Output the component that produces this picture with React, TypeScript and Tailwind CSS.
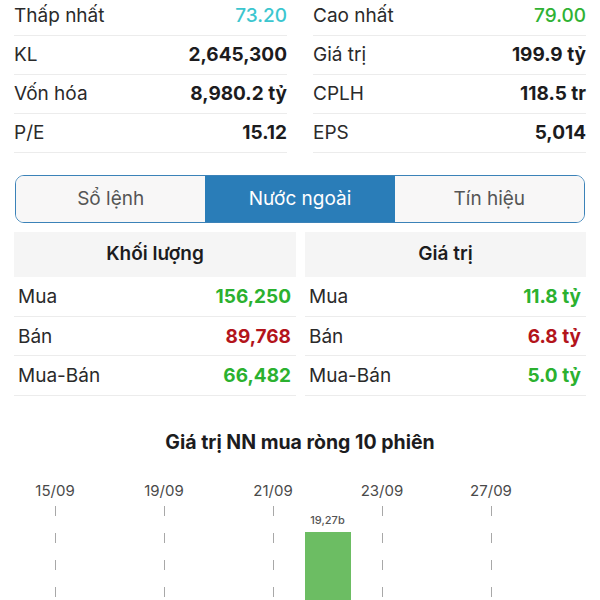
import React from "react";

const font = { fontFamily: "Inter, 'Noto Sans', sans-serif" };

const summary: [string, string, string][][] = [
  [
    ["Thấp nhất", "73.20", "text-[#3cc6cf] font-medium"],
    ["KL", "2,645,300", "text-[#1c1c1e] font-bold"],
    ["Vốn hóa", "8,980.2 tỷ", "text-[#1c1c1e] font-bold"],
    ["P/E", "15.12", "text-[#1c1c1e] font-bold"],
  ],
  [
    ["Cao nhất", "79.00", "text-[#2fb234] font-medium"],
    ["Giá trị", "199.9 tỷ", "text-[#1c1c1e] font-bold"],
    ["CPLH", "118.5 tr", "text-[#1c1c1e] font-bold"],
    ["EPS", "5,014", "text-[#1c1c1e] font-bold"],
  ],
];

const foreign = [
  {
    title: "Khối lượng",
    rows: [
      ["Mua", "156,250", "text-[#2bb12f]"],
      ["Bán", "89,768", "text-[#b3141b]"],
      ["Mua-Bán", "66,482", "text-[#2bb12f]"],
    ],
  },
  {
    title: "Giá trị",
    rows: [
      ["Mua", "11.8 tỷ", "text-[#2bb12f]"],
      ["Bán", "6.8 tỷ", "text-[#b3141b]"],
      ["Mua-Bán", "5.0 tỷ", "text-[#2bb12f]"],
    ],
  },
];

const tabs = ["Sổ lệnh", "Nước ngoài", "Tín hiệu"];
const dates = ["15/09", "19/09", "21/09", "23/09", "27/09"];

// net buy value per session (billion), only one visible in this crop
const bars = [{ slot: 5, value: 19.27 }];

export default function App() {
  return (
    <div className="w-[600px] h-[600px] overflow-hidden bg-white text-[#1c1c1e]" style={font}>
      {/* summary grid */}
      <div className="-mt-[3px] grid grid-cols-2 gap-x-[26px] px-[14px]">
        {summary.map((col, ci) => (
          <div key={ci}>
            {col.map(([label, value, cls]) => (
              <div
                key={label}
                className="flex h-[39px] items-center justify-between border-b border-[#ececec] text-[19px]"
              >
                <span className="text-[#2a2a2a]">{label}</span>
                <span className={cls}>{value}</span>
              </div>
            ))}
          </div>
        ))}
      </div>

      {/* tabs */}
      <div className="mx-[15px] mt-[22px] flex h-[48px] overflow-hidden rounded-[9px] border-[1.5px] border-[#3b82b8]">
        {tabs.map((tab, i) => (
          <div
            key={tab}
            className={`flex flex-1 items-center justify-center text-[19px] ${
              i === 1 ? "bg-[#2a7db8] text-white" : "bg-[#f8f7f7] text-[#555]"
            }`}
          >
            {tab}
          </div>
        ))}
      </div>

      {/* foreign trading */}
      <div className="mt-[9px] flex gap-[9px] px-[14px]">
        {foreign.map((block, bi) => (
          <div key={block.title} className={bi === 0 ? "w-[282px]" : "flex-1"}>
            <div className="flex h-[45px] items-center justify-center bg-[#f5f5f5] text-[19px] font-semibold text-[#1c1c1e]">
              {block.title}
            </div>
            {block.rows.map(([label, value, cls]) => (
              <div
                key={label}
                className="flex h-[39.5px] items-center justify-between border-b border-[#ececec] pt-[2px] pl-[4px] pr-[5px] text-[19px]"
              >
                <span className="text-[#2a2a2a]">{label}</span>
                <span className={`font-bold ${cls}`}>{value}</span>
              </div>
            ))}
          </div>
        ))}
      </div>

      {/* chart */}
      <div className="mt-[32px] text-center text-[19.5px] leading-[29px] font-bold text-[#1c1c1e]">
        Giá trị NN mua ròng 10 phiên
      </div>
      <div className="relative mt-[24px] h-[200px]">
        {dates.map((d, i) => (
          <div
            key={d}
            className="absolute top-0 flex w-[60px] -translate-x-1/2 flex-col items-center"
            style={{ left: 55 + i * 109 }}
          >
            <span className="text-[15px] leading-[20px] text-[#4a4a4a]">{d}</span>
            <div className="mt-[5px] flex flex-col gap-[17px]">
              {[0, 1, 2, 3, 4, 5].map((k) => (
                <div key={k} className="h-[10px] w-px bg-[#a8a8a8]" />
              ))}
            </div>
          </div>
        ))}
        {bars.map((b) => (
          <div
            key={b.slot}
            className="absolute top-[32px] flex w-[46px] -translate-x-1/2 flex-col items-center"
            style={{ left: 55 + b.slot * 54.5 }}
          >
            <span className="text-[11px] font-medium leading-[14px] text-[#555]">
              {b.value.toFixed(2).replace(".", ",")}b
            </span>
            <div className="mt-[5px] h-[200px] w-[46px] bg-[#6cbd63]" />
          </div>
        ))}
      </div>
    </div>
  );
}
